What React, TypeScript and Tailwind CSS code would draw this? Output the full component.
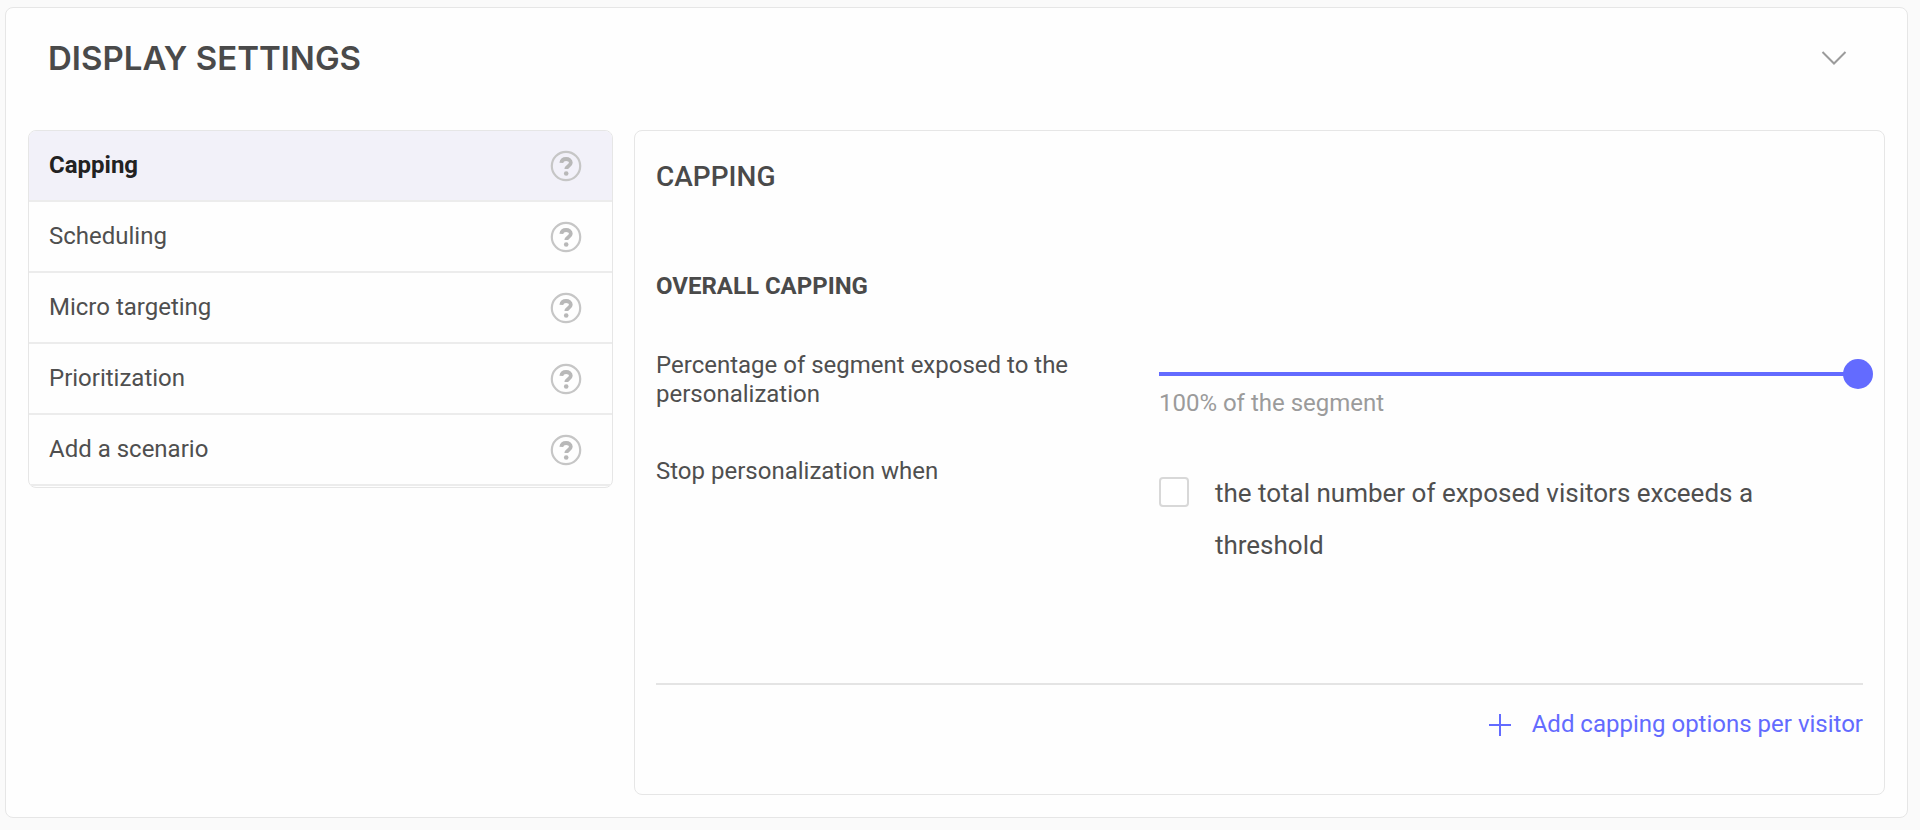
import React, { useState } from 'react';

const menuItems = [
  { id: 'capping', name: 'Capping' },
  { id: 'scheduling', name: 'Scheduling' },
  { id: 'targeting', name: 'Micro targeting' },
  { id: 'prioritization', name: 'Prioritization' },
  { id: 'scenario', name: 'Add a scenario' },
];

const HelpIcon: React.FC = () => (
  <svg width="32" height="32" viewBox="0 0 32 32" fill="none" aria-hidden="true">
    <circle cx="16" cy="16" r="14.2" stroke="#c6c6c6" strokeWidth="2.2" />
    <path
      d="M11.3 12.9c.3-2.6 2.1-3.9 4.8-3.9s4.7 1.4 4.7 3.8c0 3.1-4.5 3.2-4.5 6.3"
      stroke="#b8b8b8"
      strokeWidth="3.8"
    />
    <circle cx="16.2" cy="23.5" r="2.3" fill="#b8b8b8" />
  </svg>
);

const App: React.FC = () => {
  const [active, setActive] = useState('capping');
  const [percentage, setPercentage] = useState(100);
  const [hasThreshold, setHasThreshold] = useState(false);

  return (
    <div className="min-h-screen bg-[#fafafa] pt-[7px] pr-3 pb-3 pl-[5px] font-['Roboto',sans-serif] text-2xl text-[#4f4f4f]">
      <section className="rounded-lg border border-[#e6e6e6] bg-[#fefefe] px-[22px] pb-[22px]">
        <header className="flex items-center justify-between py-7 pr-[34px] pl-5">
          <h1 className="font-['Inter',sans-serif] text-[33px] leading-[44px] font-semibold text-[#4a4a4a]">
            DISPLAY SETTINGS
          </h1>
          <button type="button" aria-label="Collapse" className="p-1">
            <svg width="26" height="16" viewBox="0 0 26 16" fill="none" aria-hidden="true">
              <path d="M1.5 2L13 13.5 24.5 2" stroke="#9b9b9b" strokeWidth="2" />
            </svg>
          </button>
        </header>

        <div className="mt-[22px] flex items-start gap-[21px]">
          <nav className="w-[585px] shrink-0 overflow-hidden rounded-lg border border-[#e6e6e6] pb-px">
            <ul>
              {menuItems.map((item) => (
                <li
                  key={item.id}
                  className={`flex items-center border-b-2 border-[#ececec] pr-[30px] ${
                    active === item.id ? 'bg-[#f2f1f9] font-bold text-[#222222]' : ''
                  }`}
                >
                  <button
                    type="button"
                    onClick={() => setActive(item.id)}
                    className="flex-1 py-5 pl-5 text-left leading-[29px]"
                  >
                    {item.name}
                  </button>
                  <button type="button" aria-label={`Help: ${item.name}`}>
                    <HelpIcon />
                  </button>
                </li>
              ))}
            </ul>
          </nav>

          <div className="min-w-0 flex-1 rounded-lg border border-[#e6e6e6] px-[21px] pt-7 pb-[55px]">
            <h2 className="text-[28px] leading-9 font-medium text-[#4a4a4a]">CAPPING</h2>
            <h3 className="mt-[77px] leading-[29px] font-bold text-[#4a4a4a]">OVERALL CAPPING</h3>

            <div className="mt-[50px] grid grid-cols-12">
              <label htmlFor="percentage" className="col-span-5 pr-16 leading-[29px]">
                Percentage of segment exposed to the personalization
              </label>
              <div className="col-span-7 -mr-2.5">
                <input
                  id="percentage"
                  type="range"
                  min={0}
                  max={100}
                  value={percentage}
                  onChange={(e) => setPercentage(Number(e.target.value))}
                  className="mt-2 block h-[30px] w-full appearance-none bg-linear-to-r from-[#636bff] to-[#636bff] bg-size-[98%_4px] bg-left bg-no-repeat [&::-webkit-slider-thumb]:size-[30px] [&::-webkit-slider-thumb]:appearance-none [&::-webkit-slider-thumb]:rounded-full [&::-webkit-slider-thumb]:bg-[#636bff]"
                />
                <p className="leading-[29px] text-[#9b9b9b]">{percentage}% of the segment</p>
              </div>
            </div>

            <div className="mt-[39px] grid grid-cols-12">
              <p className="col-span-5 leading-[29px]">Stop personalization when</p>
              <div className="col-span-7 flex items-start gap-[26px]">
                <input
                  id="threshold"
                  type="checkbox"
                  checked={hasThreshold}
                  onChange={(e) => setHasThreshold(e.target.checked)}
                  className="mt-5 size-[30px] shrink-0 appearance-none rounded-sm border-2 border-[#d8d8d8] bg-white checked:bg-[#636bff]"
                />
                <label htmlFor="threshold" className="mt-2.5 text-[26px] leading-[52px]">
                  the total number of exposed visitors exceeds a threshold
                </label>
              </div>
            </div>

            <div className="mt-28 flex justify-end border-t-2 border-[#e4e4e4] pt-[25px]">
              <button type="button" className="flex items-center gap-5 leading-[29px] text-[#636bff]">
                <svg width="24" height="24" viewBox="0 0 24 24" fill="none" aria-hidden="true">
                  <path d="M12 1v22M1 12h22" stroke="currentColor" strokeWidth="2" />
                </svg>
                Add capping options per visitor
              </button>
            </div>
          </div>
        </div>
      </section>
    </div>
  );
};

export default App;
